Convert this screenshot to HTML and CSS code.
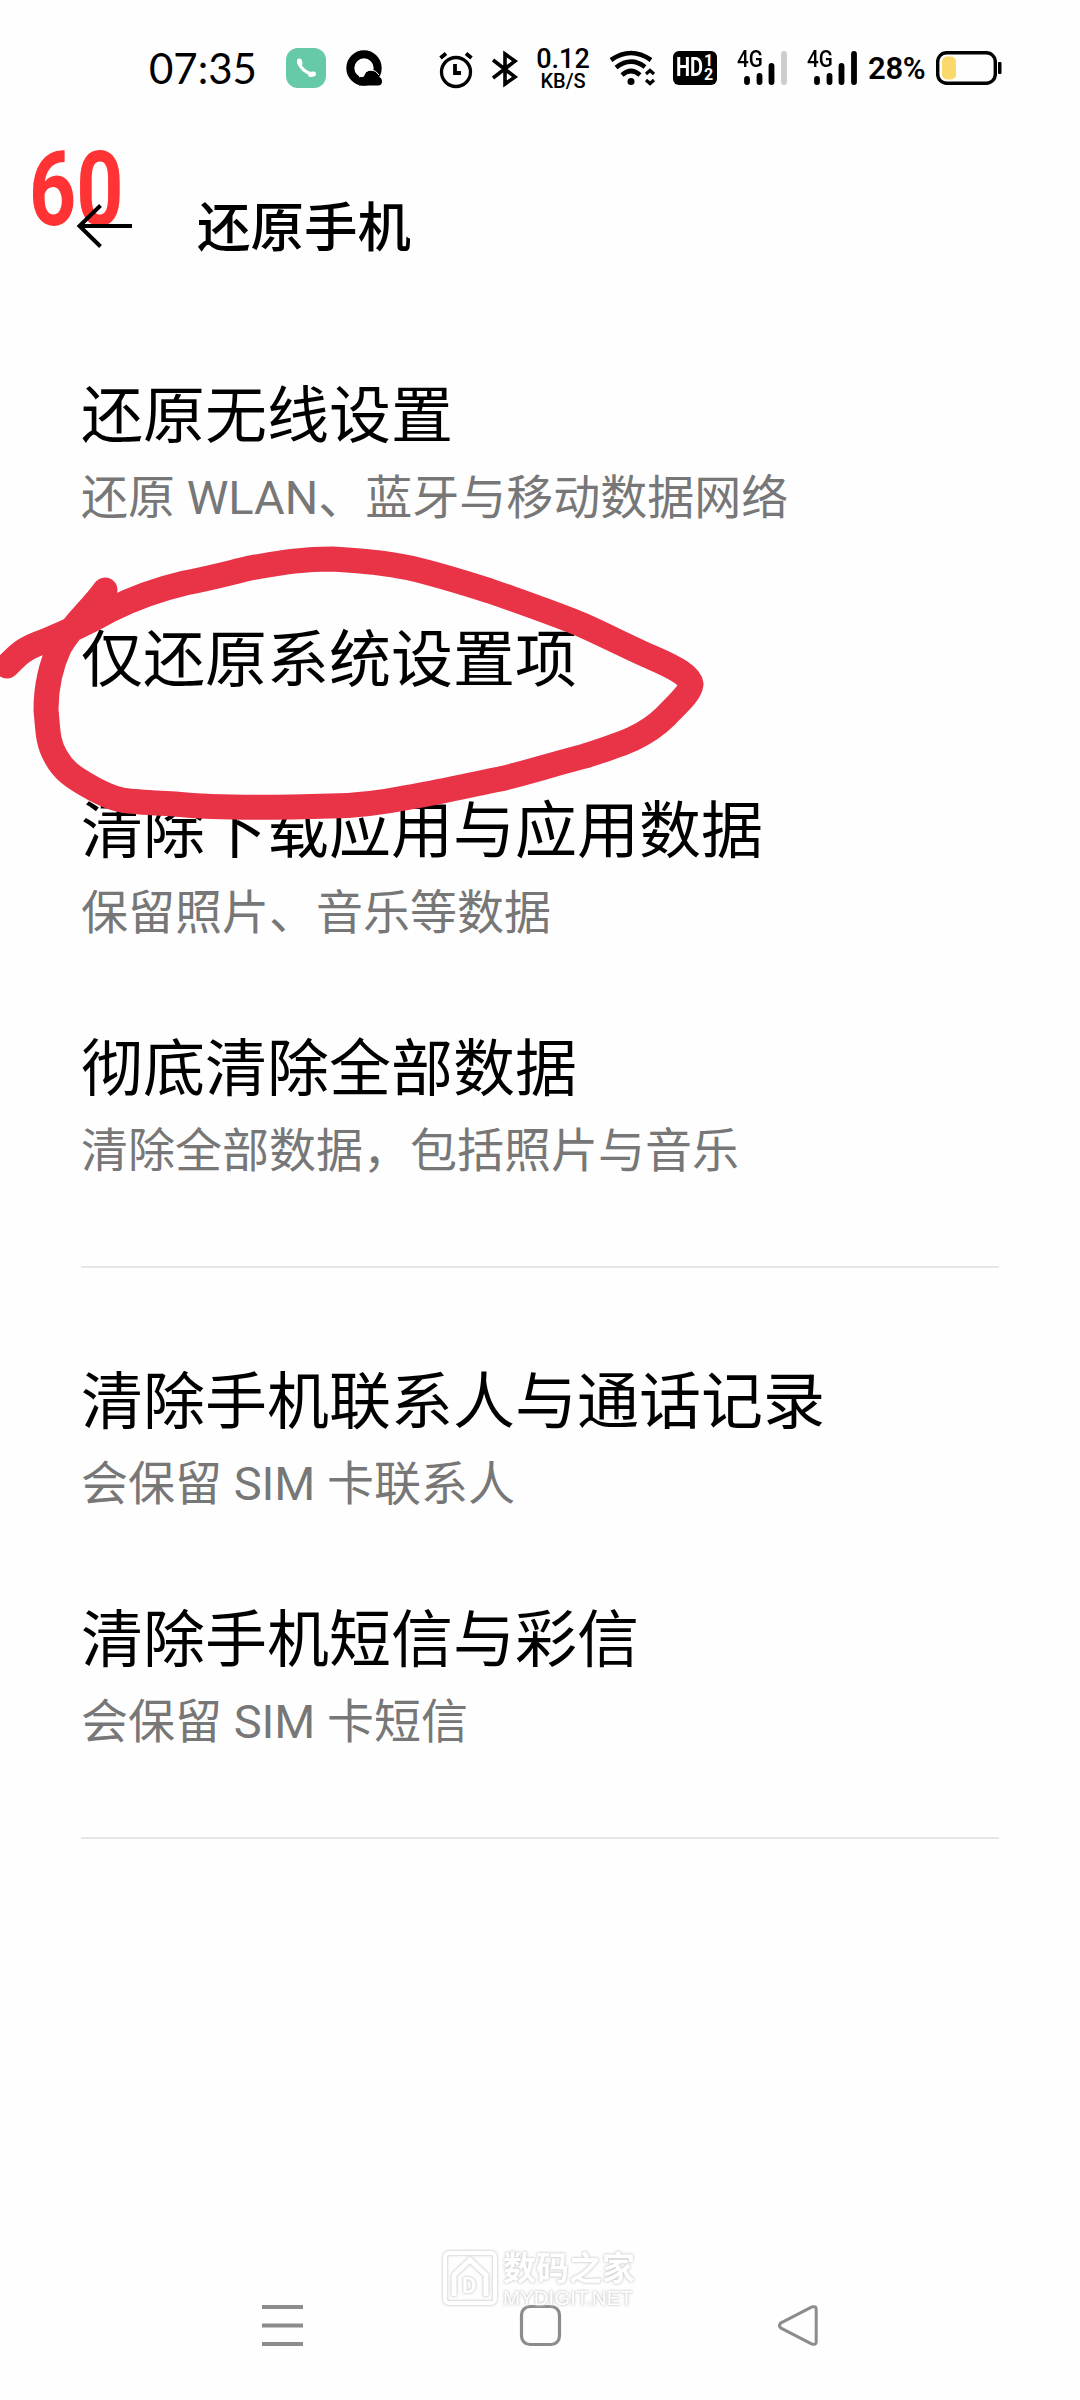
FILE: index.html
```html
<!DOCTYPE html>
<html lang="zh-CN">
<head>
<meta charset="utf-8">
<title>还原手机</title>
<link rel="stylesheet" href="styles.css">
</head>
<body>
<div class="screen">
  <div class="status">
    <span class="clock">07:35</span>
    <svg class="call" width="40" height="40" viewBox="0 0 40 40"><rect width="40" height="40" rx="12" fill="#66c9a7"/><path d="M12.500 14Q16 24 27 26.500" fill="none" stroke="#fff" stroke-width="3.400"/><path d="M13.500 13l.5 2.500M24.500 26.500l3-.5" stroke="#fff" stroke-width="5" stroke-linecap="round"/></svg>
    <svg class="browser" width="36" height="36" viewBox="0 0 36 36"><circle cx="18" cy="18" r="13.700" fill="none" stroke="#000" stroke-width="8"/><path d="M13 35.500q-2-8 5-9 1-6 7-6 6 0 7 6 4 1 4 5t-4 4z" fill="#000"/><path d="M13 27q2-2 5-2 2-5 7-5 5 0 8 5" fill="none" stroke="#fefefe" stroke-width="1"/></svg>
    <svg class="alarm" width="34" height="36" viewBox="0 0 34 36" fill="none" stroke="#000" stroke-width="3.300"><circle cx="17" cy="20" r="14.500"/><path d="M16 12v9h6M1.500 6L7 1.500M27 1.500L32.500 6" stroke-width="3.800"/></svg>
    <svg class="bt" width="26" height="34" viewBox="0 0 26 34" fill="none" stroke="#000" stroke-width="3.600"><path d="M1 8l22 17-10 7V2l10 7L1 26"/></svg>
    <span class="speed"><b>0.12</b><i>KB/S</i></span>
    <svg class="wifi" width="46" height="36" viewBox="0 0 46 36" fill="none" stroke="#000" stroke-width="4.600"><path d="M1 10Q21-4 41 10M6 17.500Q21 6 35 17M12 25q9-8 18 0"/><circle cx="21" cy="31.500" r="3.500" fill="#000" stroke="none"/><path d="M36 24l4-3.500 4 3.500M36 30l4 3.500 4-3.500" stroke-width="3.200"/></svg>
    <span class="hd"><b>HD</b><i>1<br>2</i></span>
    <span class="signal"><b>4G</b><svg width="44" height="34" viewBox="0 0 44 34" stroke="#000" stroke-width="5.800" stroke-linecap="round"><path d="M3 28v3M15.500 25v6M27.500 15V31"/><path d="M40 3v28" stroke="#ccc"/></svg></span>
    <span class="signal"><b>4G</b><svg width="44" height="34" viewBox="0 0 44 34" stroke="#000" stroke-width="5.800" stroke-linecap="round"><path d="M3 28v3M15.500 25v6M27.500 15V31M40 3v28"/></svg></span>
    <span class="percent">28%</span>
    <svg class="battery" width="67" height="34" viewBox="0 0 67 34"><rect x="1.700" y="1.700" width="57.600" height="30.600" rx="9" fill="none" stroke="#000" stroke-width="3.400"/><rect x="6" y="5.500" width="14" height="23" rx="5" fill="#fbd86b"/><rect x="62" y="11" width="3.500" height="12" rx="1" fill="#000"/></svg>
  </div>

  <header class="header">
    <svg class="back" width="56" height="46" viewBox="0 0 56 46" fill="none" stroke="#000" stroke-width="4"><path d="M24.500 2.500L3.500 23l21 20.500M3 23h53"/></svg>
    <h1>还原手机</h1>
    <span class="fps">60</span>
  </header>

  <main class="list">
    <section class="item"><h2>还原无线设置</h2><p>还原 WLAN、蓝牙与移动数据网络</p></section>
    <section class="item single"><h2>仅还原系统设置项</h2></section>
    <section class="item"><h2>清除下载应用与应用数据</h2><p>保留照片、音乐等数据</p></section>
    <section class="item"><h2>彻底清除全部数据</h2><p>清除全部数据，包括照片与音乐</p></section>
    <hr>
    <section class="item"><h2>清除手机联系人与通话记录</h2><p>会保留 SIM 卡联系人</p></section>
    <section class="item"><h2>清除手机短信与彩信</h2><p>会保留 SIM 卡短信</p></section>
    <hr>
  </main>

  <nav class="nav">
    <svg width="41" height="41" viewBox="0 0 41 41" stroke="#8c8c8c" stroke-width="3.800"><path d="M0 2h41M0 20.500h41M0 39h41"/></svg>
    <svg width="41" height="41" viewBox="0 0 41 41"><rect x="1.500" y="1.500" width="38" height="38" rx="8.500" fill="none" stroke="#8c8c8c" stroke-width="3.200"/></svg>
    <svg width="41" height="41" viewBox="0 0 41 41"><path d="M2.500 18.200L34 1.900q4.200-1 4.200 2v33.200q0 3-4.200 2L2.500 22.800q-2-2.300 0-4.600z" fill="none" stroke="#8c8c8c" stroke-width="3" stroke-linejoin="round"/></svg>
  </nav>

  <svg class="scribble" width="720" height="300" viewBox="0 530 720 300"><path d="M7 666C18 655 22 649 45 641C70 631 85 624 110 610C130 600 155 590 185 583C215 577 225 574 250 568C280 563 300 559 332 559C375 562 385 563 410 568C440 575 465 583 490 591C530 605 555 614 580 624C605 635 630 648 653 658C676 668 690 676 691 684C690 694 676 705 666 716C645 737 622 744 585 756C550 765 530 772 500 779C460 787 435 793 410 797C385 802 360 806 330 806C300 807 225 809 175 804C125 801 120 803 94 789C72 777 63 770 56 757C47 742 48 728 46 710C46 685 51 665 60 646C75 621 90 611 105 590"/></svg>

  <div class="watermark">
    <svg width="56" height="56" viewBox="0 0 56 56" fill="none" stroke="#fff" stroke-width="4"><rect x="3" y="3" width="50" height="50" rx="4"/><path d="M12 46V25L28 10l16 15v21" stroke-width="5"/></svg>
    <b class="mark">D</b>
    <div class="brand"><b>数码之家</b><i>MYDIGIT.NET</i></div>
  </div>
</div>
</body>
</html>
```
FILE: styles.css
```css
* { box-sizing: border-box; margin: 0; padding: 0; }
body { background: #fefefe; }
b, i { font-style: normal; font-weight: 500; display: block; }
svg { display: block; flex: none; overflow: visible; }

.screen {
  position: relative;
  width: 1080px;
  height: 2400px;
  overflow: hidden;
  display: flex;
  flex-direction: column;
  color: #000;
  background: #fefefe;
  font-family: Roboto, "Noto Sans CJK SC", sans-serif;
}

.status { height: 136px; padding-left: 149px; display: flex; align-items: center; flex: none; }
.clock { width: 137px; font: 400 42px/50px Lato, sans-serif; white-space: nowrap; }
.browser { margin-left: 20px; }
.alarm { margin: 3px 0 0 57px; }
.bt { margin: 2px 0 0 19px; }
.speed { width: 54px; margin: 3px 0 0 18px; text-align: center; }
.speed b { font-size: 27px; line-height: 23px; }
.speed i { font-size: 20px; line-height: 21px; }
.wifi { margin-left: 20px; }
.hd {
  width: 44px; height: 34px; margin-left: 17px; padding-left: 3px;
  display: flex; align-items: center;
  background: #000; color: #fefefe; border-radius: 6px;
}
.hd b { width: 28px; font-size: 25px; line-height: 34px; font-weight: 700; transform: scaleX(0.8); transform-origin: left; }
.hd i { font-size: 16px; line-height: 14px; font-weight: 700; }
.signal { position: relative; margin-left: 27px; }
.signal + .signal { margin-left: 26px; }
.signal b { position: absolute; left: -7px; top: -3px; font-size: 23px; line-height: 24px; transform: scaleX(0.9); transform-origin: left; }
.percent { width: 68px; margin-left: 10px; font-size: 31px; font-weight: 600; letter-spacing: -0.3px; line-height: 36px; padding-top: 2px; }

.header { position: relative; z-index: 0; height: 182px; padding-left: 76px; display: flex; align-items: center; margin-bottom: 16px; flex: none; }
.header .back { margin-top: -2px; }
.header h1 { margin: 3px 0 0 65px; font-size: 53.500px; font-weight: 500; line-height: 70px; }
.fps {
  position: absolute; left: 29px; top: 4px;
  color: #f33; font-size: 103px; line-height: 100px; font-weight: 700;
  transform: scaleX(0.8); transform-origin: left; z-index: -1;
}

.list { padding: 0 81px; }
.item { height: 238.500px; padding-top: 43px; }
.item h2 { font-size: 62px; font-weight: 400; line-height: 80px; white-space: nowrap; }
.item p { font-size: 47px; line-height: 60px; margin-top: 11px; color: #777; white-space: nowrap; }
.single { height: 176px; padding-top: 48px; }
hr { border: 0; height: 2px; background: #e6e6e6; margin: 40px 0 52px; }

.nav { margin-top: auto; padding: 0 261px 54px 262px; display: flex; justify-content: space-between; }

.scribble { position: absolute; left: 0; top: 530px; fill: none; stroke: #e93448; stroke-width: 25px; stroke-linecap: round; stroke-linejoin: round; }

.watermark {
  position: absolute; left: 442px; top: 2250px;
  display: flex; color: #fff;
  filter: drop-shadow(0 0 1px #ccc) drop-shadow(0 0 1px #ddd);
}
.watermark b { font-weight: 700; }
.mark { position: absolute; left: 20px; top: 23px; font-size: 22px; line-height: 26px; }
.brand { margin-left: 5px; width: 140px; }
.brand b { font-size: 33px; line-height: 37px; white-space: nowrap; }
.brand i { font: 400 20.500px/22px "Liberation Sans", sans-serif; white-space: nowrap; }
```
